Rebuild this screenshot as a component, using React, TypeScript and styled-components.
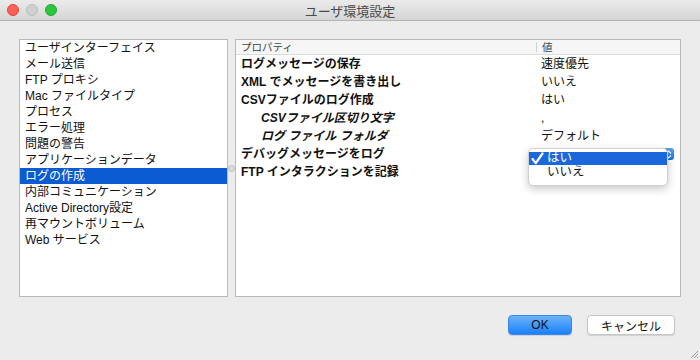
import React from 'react';
import styled, { createGlobalStyle } from 'styled-components';

const GlobalStyle = createGlobalStyle`
  html, body {
    margin: 0;
    padding: 0;
    background: #ececec;
  }
  body {
    font-family: "Liberation Sans", "Noto Sans CJK JP", sans-serif;
    font-size: 12px;
    color: #111;
  }
`

const Window = styled.div`
  position: relative;
  width: 700px;
  height: 360px;
  background: #ececec;
  display: flex;
  flex-direction: column;
  overflow: hidden;
`

const TitleBar = styled.div`
  height: 21px;
  flex: none;
  display: grid;
  grid-template-columns: 1fr auto 1fr;
  align-items: center;
  background: linear-gradient(#ebebeb, #d5d5d5);
  border-bottom: 1px solid #b3b3b3;
  box-sizing: border-box;
`

const Lights = styled.div`
  display: flex;
  gap: 7px;
  padding-left: 7px;
`

const Light = styled.span<{ $color: string; $edge: string }>`
  width: 12px;
  height: 12px;
  border-radius: 50%;
  box-sizing: border-box;
  background: ${p => p.$color};
  border: 1px solid ${p => p.$edge};
`

const Title = styled.div`
  font-size: 13px;
  color: #4a4a4a;
`

const Content = styled.div`
  display: flex;
  padding: 18px 19px 0 19px;
  height: 258px;
  flex: none;
`

const ListBox = styled.div`
  width: 209px;
  box-sizing: border-box;
  background: #fff;
  border: 1px solid #b9b9b9;
  display: flex;
  flex-direction: column;
`

const ListItem = styled.div<{ $selected?: boolean }>`
  height: 16px;
  line-height: 16px;
  padding-left: 5px;
  white-space: nowrap;
  background: ${p => (p.$selected ? '#0b5bd2' : 'transparent')};
  color: ${p => (p.$selected ? '#fff' : '#111')};
`

const Splitter = styled.div`
  width: 7px;
  display: flex;
  align-items: center;
  justify-content: center;
`

const Knob = styled.span`
  width: 5px;
  height: 5px;
  border-radius: 50%;
  background: #dadada;
  border: 1px solid #c2c2c2;
`

const TablePanel = styled.div`
  flex: 1;
  box-sizing: border-box;
  background: #fff;
  border: 1px solid #b9b9b9;
  display: flex;
  flex-direction: column;
`

const HeaderRow = styled.div`
  display: grid;
  grid-template-columns: 300px 1fr;
  height: 14px;
  background: #f6f6f6;
  border-bottom: 1px solid #dcdcdc;
  font-size: 10.5px;
  color: #444;
`

const HeaderCell = styled.div<{ $divider?: boolean }>`
  padding-left: 5px;
  border-left: ${p => (p.$divider ? '1px solid #d0d0d0' : 'none')};
  margin: ${p => (p.$divider ? '2px 0' : '0')};
  line-height: ${p => (p.$divider ? '10px' : '14px')};
`

const Row = styled.div`
  position: relative;
  display: grid;
  grid-template-columns: 300px 1fr;
  height: 18px;
  line-height: 18px;
`

const PropCell = styled.div<{ $sub?: boolean }>`
  padding-left: ${p => (p.$sub ? '25px' : '5px')};
  font-weight: bold;
  font-style: ${p => (p.$sub ? 'italic' : 'normal')};
  white-space: nowrap;
`

const ValueCell = styled.div`
  position: relative;
  padding-left: 5px;
  white-space: nowrap;
`

const Stepper = styled.div`
  position: absolute;
  top: 3px;
  left: 127px;
  width: 11px;
  height: 12px;
  border-radius: 3px;
  background: linear-gradient(#5aa2f7, #1b6fe4);
  display: flex;
  align-items: center;
  justify-content: center;
`

const Popup = styled.div`
  position: absolute;
  top: 3px;
  left: -8px;
  width: 140px;
  box-sizing: border-box;
  padding: 3px 0 5px;
  background: #fff;
  border: 1px solid #cfcfcf;
  border-radius: 5px;
  box-shadow: 0 3px 8px rgba(0, 0, 0, 0.22);
  z-index: 2;
`

const PopupItem = styled.div<{ $active?: boolean }>`
  height: 13px;
  line-height: 13px;
  padding-left: 18px;
  position: relative;
  font-size: 12.5px;
  background: ${p => (p.$active ? '#1a68dc' : 'transparent')};
  color: ${p => (p.$active ? '#fff' : '#111')};
  & + & {
    height: 15px;
    line-height: 15px;
  }
`

const Check = styled.svg`
  position: absolute;
  left: 2px;
  top: 0;
`

const Footer = styled.div`
  display: flex;
  justify-content: flex-end;
  gap: 15px;
  padding: 18px 25px 0 0;
`

const Button = styled.button<{ $primary?: boolean }>`
  height: 20px;
  box-sizing: border-box;
  padding: 0;
  border-radius: 4px;
  font-family: "Liberation Sans", "Noto Sans CJK JP", sans-serif;
  font-size: 12px;
  color: #111;
  width: ${p => (p.$primary ? '64px' : '88px')};
  background: ${p => (p.$primary ? 'linear-gradient(#6cb3fa, #1b80fb)' : '#fff')};
  border: 1px solid ${p => (p.$primary ? '#3b88e8' : '#c6c6c6')};
  box-shadow: 0 1px 1px rgba(0, 0, 0, 0.12);
`

const Grip = styled.svg`
  position: absolute;
  right: 1px;
  bottom: 1px;
`

const categories = [
    'ユーザインターフェイス',
    'メール送信',
    'FTP プロキシ',
    'Mac ファイルタイプ',
    'プロセス',
    'エラー処理',
    '問題の警告',
    'アプリケーションデータ',
    'ログの作成',
    '内部コミュニケーション',
    'Active Directory設定',
    '再マウントボリューム',
    'Web サービス',
]

const settings = [
    { name: 'ログメッセージの保存', value: '速度優先' },
    { name: 'XML でメッセージを書き出し', value: 'いいえ' },
    { name: 'CSVファイルのログ作成', value: 'はい' },
    { name: 'CSVファイル区切り文字', value: ',', sub: true },
    { name: 'ログ ファイル フォルダ', value: 'デフォルト', sub: true },
    { name: 'デバッグメッセージをログ', value: '', popup: true },
    { name: 'FTP インタラクションを記録', value: '' },
]

const App = () => {
    return (
        <>
            <GlobalStyle />
            <Window>
                <TitleBar>
                    <Lights>
                        <Light $color="#fc5f57" $edge="#de4640" />
                        <Light $color="#d0d0d0" $edge="#bcbcbc" />
                        <Light $color="#2ac73f" $edge="#1ea932" />
                    </Lights>
                    <Title>ユーザ環境設定</Title>
                    <div />
                </TitleBar>

                <Content>
                    <ListBox>
                        {categories.map(c => (
                            <ListItem key={c} $selected={c === 'ログの作成'}>{c}</ListItem>
                        ))}
                    </ListBox>
                    <Splitter><Knob /></Splitter>
                    <TablePanel>
                        <HeaderRow>
                            <HeaderCell>プロパティ</HeaderCell>
                            <HeaderCell $divider>値</HeaderCell>
                        </HeaderRow>
                        {settings.map(s => (
                            <Row key={s.name}>
                                <PropCell $sub={s.sub}>{s.name}</PropCell>
                                <ValueCell>
                                    {s.value}
                                    {s.popup && (
                                        <>
                                            <Stepper>
                                                <svg width="7" height="9" viewBox="0 0 7 9">
                                                    <path d="M1 3.5 L3.5 1 L6 3.5 M1 5.5 L3.5 8 L6 5.5" stroke="#fff" strokeWidth="1.2" fill="none" />
                                                </svg>
                                            </Stepper>
                                            <Popup>
                                                <PopupItem $active>
                                                    <Check width="13" height="13" viewBox="0 0 13 13">
                                                        <path d="M1.5 7 L4.8 11.2 L11.5 1.5" stroke="#fff" strokeWidth="2.2" fill="none" strokeLinecap="round" strokeLinejoin="round" />
                                                    </Check>
                                                    はい
                                                </PopupItem>
                                                <PopupItem>いいえ</PopupItem>
                                            </Popup>
                                        </>
                                    )}
                                </ValueCell>
                            </Row>
                        ))}
                    </TablePanel>
                </Content>

                <Footer>
                    <Button $primary>OK</Button>
                    <Button>キャンセル</Button>
                </Footer>

                <Grip width="10" height="10" viewBox="0 0 10 10">
                    <path d="M9 2 L2 9 M9 5 L5 9 M9 8 L8 9" stroke="#9a9a9a" strokeWidth="1" />
                </Grip>
            </Window>
        </>
    )
}

export default App;
